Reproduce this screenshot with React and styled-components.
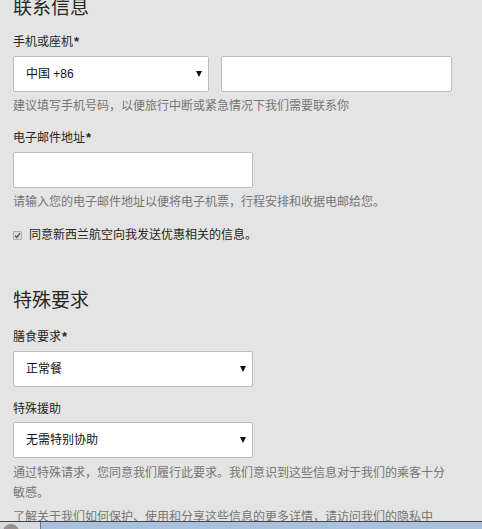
import React from "react";
import styled, { createGlobalStyle } from "styled-components";

const Global = createGlobalStyle`
  html, body {
    margin: 0;
    padding: 0;
    background: #e4e4e4;
  }
  body {
    font-family: "Liberation Sans", "Noto Sans CJK SC", sans-serif;
    color: #333;
    overflow: hidden;
  }
`;

const Page = styled.main`
  padding: 0 0 0 13px;
  margin-top: -4px;
  max-width: 440px;
`;

const Heading = styled.h2`
  margin: ${(p) => p.$top || 0}px 0 0;
  font-size: 19px;
  line-height: 24px;
  font-weight: 400;
  color: #262626;
`;

const Label = styled.label`
  display: block;
  margin-top: ${(p) => p.$top}px;
  font-size: 12px;
  line-height: 18px;
  color: #262626;
`;

const Req = styled.span`
  font-family: "Liberation Sans", sans-serif;
  font-weight: 700;
  font-size: 13px;
  margin-left: 1px;
`;

const Row = styled.div`
  display: flex;
  gap: 12px;
  margin-top: ${(p) => p.$top}px;
`;

const SelectWrap = styled.div`
  position: relative;
  width: ${(p) => p.$w}px;
  height: 36px;
  box-sizing: border-box;
  margin-top: ${(p) => p.$top || 0}px;
`;

const Select = styled.select`
  appearance: none;
  -webkit-appearance: none;
  width: 100%;
  height: 100%;
  box-sizing: border-box;
  border: 1px solid #bdbdbd;
  border-radius: 2px;
  background: #fff;
  padding: 0 24px 0 12px;
  font-family: "Liberation Sans", "Noto Sans CJK SC", sans-serif;
  font-size: 12px;
  color: #111;
  outline: none;
`;

const Arrow = styled.svg`
  position: absolute;
  right: 7px;
  top: 15px;
  width: 6px;
  height: 6px;
  pointer-events: none;
`;

const TextInput = styled.input`
  display: block;
  width: ${(p) => p.$w}px;
  height: 36px;
  box-sizing: border-box;
  border: 1px solid #bdbdbd;
  border-radius: 2px;
  background: #fff;
  margin: ${(p) => p.$top || 0}px 0 0;
  padding: 0 12px;
  outline: none;
`;

const Help = styled.p`
  margin: ${(p) => p.$top}px 0 0;
  font-size: 12px;
  line-height: ${(p) => p.$lh || 18}px;
  color: #767676;
`;

const CheckRow = styled.label`
  display: flex;
  align-items: center;
  gap: 7px;
  margin-top: ${(p) => p.$top}px;
  font-size: 12px;
  line-height: 18px;
  color: #262626;
`;

const Box = styled.span`
  width: 9px;
  height: 9px;
  box-sizing: border-box;
  border: 1px solid #b0b0b0;
  border-radius: 1px;
  background: #dcdcdc;
  display: flex;
  align-items: center;
  justify-content: center;
  margin-top: 1px;
`;

const Taskbar = styled.footer`
  position: fixed;
  left: 0;
  right: 0;
  bottom: 0;
  height: 7px;
  border-top: 1px solid #3e4650;
  display: flex;
  background: #a9c1dc;
`;

const Start = styled.div`
  width: 40px;
  border-right: 1px solid #6d7c8c;
  background: #d9dadc;
  position: relative;
  overflow: hidden;
`;

const Avatar = styled.span`
  position: absolute;
  left: 3px;
  top: 2px;
  width: 16px;
  height: 16px;
  border-radius: 50%;
  background: #9b8f8f;
`;

function Dropdown({ w, top, value, options }) {
  return (
    <SelectWrap $w={w} $top={top}>
      <Select defaultValue={value}>
        {options.map((o) => (
          <option key={o}>{o}</option>
        ))}
      </Select>
      <Arrow viewBox="0 0 6 6">
        <polygon points="0,0 6,0 3,6" fill="#111" />
      </Arrow>
    </SelectWrap>
  );
}

export default function App() {
  return (
    <>
      <Global />
      <Page>
        <Heading>联系信息</Heading>
        <Label $top={13}>
          手机或座机<Req>*</Req>
        </Label>
        <Row $top={5}>
          <Dropdown w={196} value="中国 +86" options={["中国 +86", "新西兰 +64"]} />
          <TextInput $w={231} />
        </Row>
        <Help $top={5}>建议填写手机号码，以便旅行中断或紧急情况下我们需要联系你</Help>
        <Label $top={14}>
          电子邮件地址<Req>*</Req>
        </Label>
        <TextInput $w={240} $top={5} />
        <Help $top={5}>请输入您的电子邮件地址以便将电子机票，行程安排和收据电邮给您。</Help>
        <CheckRow $top={15}>
          <Box>
            <svg width="7" height="7" viewBox="0 0 7 7">
              <path d="M1 3.6 L2.8 5.4 L6 1.2" stroke="#555" strokeWidth="1.4" fill="none" />
            </svg>
          </Box>
          同意新西兰航空向我发送优惠相关的信息。
        </CheckRow>

        <Heading $top={45}>特殊要求</Heading>
        <Label $top={15}>
          膳食要求<Req>*</Req>
        </Label>
        <Dropdown w={240} top={5} value="正常餐" options={["正常餐", "素食"]} />
        <Label $top={13}>特殊援助</Label>
        <Dropdown w={240} top={4} value="无需特别协助" options={["无需特别协助", "轮椅协助"]} />
        <Help $top={5} $lh={20}>
          通过特殊请求，您同意我们履行此要求。我们意识到这些信息对于我们的乘客十分敏感。
        </Help>
        <Help $top={4} $lh={20}>
          了解关于我们如何保护、使用和分享这些信息的更多详情，请访问我们的隐私中心。
        </Help>
      </Page>
      <Taskbar>
        <Start>
          <Avatar />
        </Start>
      </Taskbar>
    </>
  );
}
